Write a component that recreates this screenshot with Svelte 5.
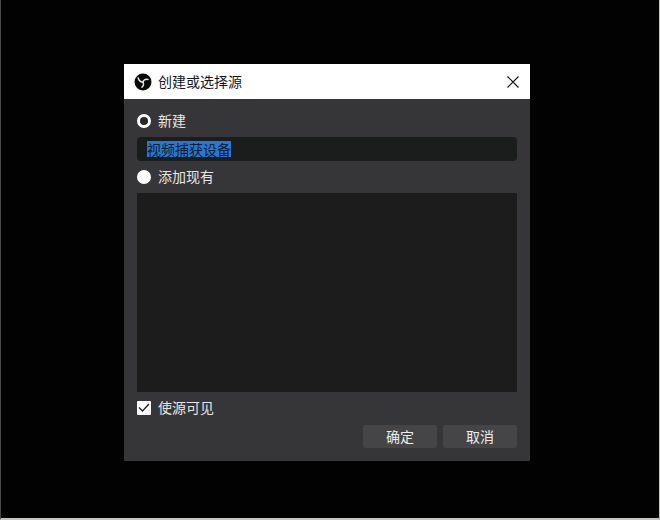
<script>
    import { onMount } from "svelte"

    let mode = "new"
    let sourceName = "视频捕获设备"
    let visible = true
    let nameInput

    onMount(() => {
        nameInput.focus({ preventScroll: true })
        nameInput.select()
    })
</script>

<main>
    <section class="dialog" role="dialog" aria-labelledby="dialog-title">
        <header>
            <svg class="logo" viewBox="0 0 18 18" aria-hidden="true">
                <circle cx="9" cy="9" r="8.5" fill="#080808" />
                <g fill="none" stroke="#e4e4e4" stroke-width="1.5" stroke-linecap="round">
                    <path d="M8.8 9.3C7 9 4.8 7.6 4.2 5" />
                    <path d="M8.8 9.3C9.4 7.4 11.4 6 14 6.4" />
                    <path d="M8.8 9.3C10 10.6 9.8 12.8 8 14.2" />
                </g>
            </svg>
            <h1 id="dialog-title">创建或选择源</h1>
            <button class="close" type="button" aria-label="关闭">
                <svg viewBox="0 0 12 12" aria-hidden="true">
                    <path d="M0.5 0.5L11.5 11.5M11.5 0.5L0.5 11.5" fill="none" stroke="#111" stroke-width="1.2" />
                </svg>
            </button>
        </header>

        <form on:submit|preventDefault>
            <!-- create a new source -->
            <label class="option">
                <input type="radio" name="mode" value="new" bind:group={mode}>
                <span>新建</span>
            </label>
            <div class="name">
                <input type="text" aria-label="源名称" spellcheck="false" bind:value={sourceName} bind:this={nameInput}>
            </div>

            <!-- pick an existing one -->
            <label class="option">
                <input type="radio" name="mode" value="existing" bind:group={mode}>
                <span>添加现有</span>
            </label>
            <div class="sources" role="listbox" aria-label="现有源" tabindex="-1"></div>

            <label class="option">
                <input type="checkbox" bind:checked={visible}>
                <span>使源可见</span>
            </label>
            <div class="actions">
                <button type="submit">确定</button>
                <button type="button">取消</button>
            </div>
        </form>
    </section>
</main>

<style>
    :global(body) {
        background: #000;
    }

    main {
        box-sizing: border-box;
        min-height: 100vh;
        padding: 64px 129px 56px 123px;
        background: #020202;
        border: 1px solid #c4c4c0;
        border-top-color: #181818;
        border-top: 0;
        border-left-color: #484848;
        border-bottom-width: 2px;
        font-family: "Liberation Sans", "Noto Sans CJK SC", sans-serif;
        font-size: 14px;
    }

    .dialog {
        background: #363638;
        color: #e6e6e6;
    }

    header {
        display: flex;
        align-items: center;
        height: 35px;
        padding: 0 11px 0 10px;
        background: #fff;
        box-sizing: border-box;
    }

    .logo {
        width: 18px;
        height: 18px;
        margin-right: 6px;
    }

    h1 {
        flex: 1;
        margin: 0;
        color: #15151f;
        font-size: 14px;
        font-weight: 400;
        line-height: 20px;
    }

    .close {
        display: flex;
        padding: 0;
        background: none;
        border: 0;
    }

    .close svg {
        width: 12px;
        height: 12px;
    }

    form {
        display: flex;
        flex-direction: column;
        padding: 12px 13px 13px;
    }

    .option {
        display: flex;
        align-items: center;
        gap: 7px;
        height: 20px;
        line-height: 20px;
    }

    input[type="radio"] {
        appearance: none;
        box-sizing: border-box;
        width: 14px;
        height: 14px;
        margin: 0;
        background: #fff;
        border: 3px solid #fff;
        border-radius: 50%;
    }

    input[type="radio"]:checked {
        background: #29292b;
    }

    input[type="checkbox"] {
        appearance: none;
        width: 14px;
        height: 14px;
        margin: 0;
        background: #fff;
        border-radius: 1px;
    }

    input[type="checkbox"]:checked {
        background: #fff url("data:image/svg+xml,%3Csvg xmlns='http://www.w3.org/2000/svg' viewBox='0 0 14 14'%3E%3Cpath d='M2 6.5L5.5 10L12 3' fill='none' stroke='%23222' stroke-width='1.4'/%3E%3C/svg%3E");
    }

    .name {
        display: flex;
        align-items: center;
        height: 24px;
        margin: 6px 0;
        padding: 0 10px;
        background: #1b1c1c;
        border-radius: 4px;
    }

    .name input {
        flex: 1;
        min-width: 0;
        height: 16px;
        padding: 0;
        overflow: hidden;
        background: none;
        border: 0;
        outline: none;
        color: #e6e6e6;
        font-family: inherit;
        font-size: 14px;
    }

    .name input::selection {
        background: #2878d2;
        color: #0c1c34;
    }

    .sources {
        height: 199px;
        margin: 6px 0;
        background: #1c1c1c;
    }

    .actions {
        display: flex;
        justify-content: flex-end;
        gap: 6px;
        margin-top: 7px;
    }

    .actions button {
        width: 74px;
        height: 23px;
        padding: 0;
        background: #454547;
        border: 0;
        border-radius: 2px;
        color: #ececec;
        font-family: inherit;
        font-size: 14px;
        line-height: 20px;
    }
</style>
